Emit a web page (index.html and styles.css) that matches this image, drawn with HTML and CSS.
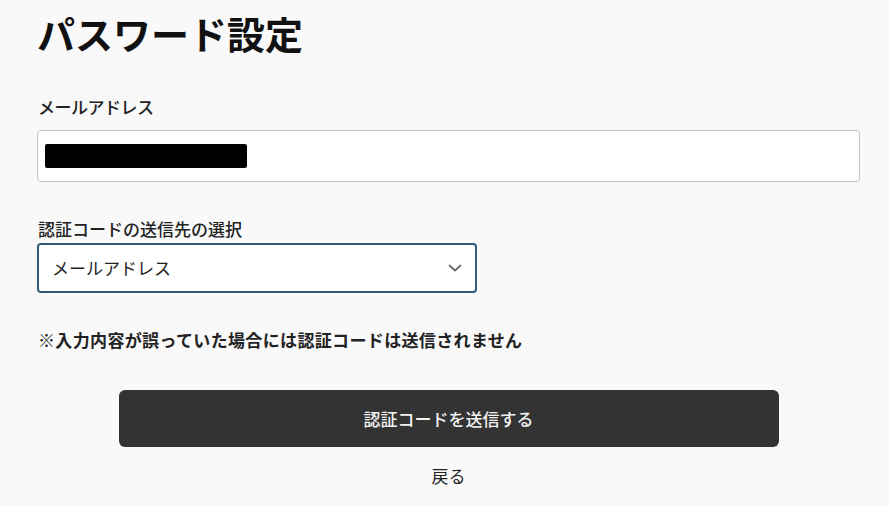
FILE: index.html
```html
<!DOCTYPE html>
<html lang="ja">
<head>
<meta charset="utf-8">
<title>パスワード設定</title>
<link rel="stylesheet" href="styles.css">
</head>
<body>
<main class="page">
  <h1 class="title">パスワード設定</h1>
  <div class="field field-email">
    <label class="label">メールアドレス</label>
    <div class="input"><span class="redacted"></span></div>
  </div>
  <div class="field field-select">
    <label class="label">認証コードの送信先の選択</label>
    <div class="select">
      <span class="select-value">メールアドレス</span>
      <svg class="chevron" width="14" height="8" viewBox="0 0 14 8"><path d="M1.5 1.5 L7 6.5 L12.5 1.5" fill="none" stroke="#666" stroke-width="1.7" stroke-linecap="round" stroke-linejoin="round"/></svg>
    </div>
  </div>
  <p class="note">※入力内容が誤っていた場合には認証コードは送信されません</p>
  <div class="actions">
    <button class="submit" type="button">認証コードを送信する</button>
    <a class="back" href="#">戻る</a>
  </div>
</main>
</body>
</html>
```

FILE: styles.css
```css
html, body {
  margin: 0;
  background: #f9f9f9;
}
body {
  font-family: "Noto Sans CJK JP", "Noto Sans", sans-serif;
  color: #222;
}
.page {
  padding: 10px 29px 0 37px;
}
.title {
  margin: 0;
  font-size: 38px;
  line-height: 46px;
  font-weight: 700;
  color: #111;
  letter-spacing: 0;
}
.field {
  display: flex;
  flex-direction: column;
}
.field-email {
  margin-top: 39px;
  gap: 11px;
}
.field-select {
  margin-top: 35px;
  gap: 2px;
}
.label {
  font-size: 17px;
  line-height: 24px;
  font-weight: 500;
  padding-left: 1px;
}
.field-email .label {
  letter-spacing: -0.5px;
}
.input {
  box-sizing: border-box;
  height: 52px;
  background: #fff;
  border: 1px solid #c2c2c2;
  border-radius: 4px;
  display: flex;
  align-items: center;
  padding-left: 7px;
}
.redacted {
  display: block;
  width: 202px;
  height: 24px;
  background: #000;
  border-radius: 2px;
}
.select {
  box-sizing: border-box;
  width: 440px;
  height: 50px;
  background: #fff;
  border: 2px solid #2e5d73;
  border-radius: 4px;
  display: flex;
  align-items: center;
  justify-content: space-between;
  padding: 0 13px 0 13px;
}
.select-value {
  font-size: 17px;
  line-height: 24px;
}
.chevron {
  display: block;
}
.note {
  margin: 35px 0 0;
  font-size: 17px;
  line-height: 24px;
  font-weight: 700;
  color: #222;
  padding-left: 1px;
  letter-spacing: 0.35px;
}
.actions {
  margin-top: 38px;
  display: flex;
  flex-direction: column;
  align-items: center;
  gap: 17px;
}
.submit {
  width: 660px;
  height: 57px;
  border: none;
  border-radius: 6px;
  background: #333;
  color: #f2f2f2;
  font-family: inherit;
  font-size: 17px;
  font-weight: 500;
}
.back {
  font-size: 17px;
  line-height: 24px;
  color: #222;
  text-decoration: none;
}
```
